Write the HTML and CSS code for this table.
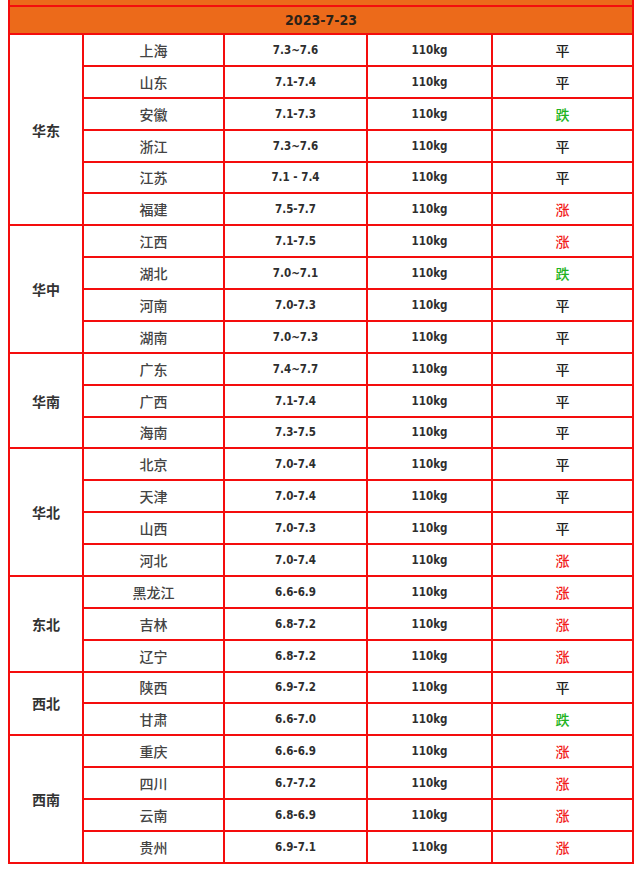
FILE: index.html
```html
<!DOCTYPE html>
<html lang="zh">
<head>
<meta charset="utf-8">
<title>2023-7-23</title>
<link rel="stylesheet" href="styles.css">
</head>
<body>
<table class="price">
  <colgroup>
    <col class="c-region"><col class="c-city"><col class="c-price"><col class="c-weight"><col class="c-trend">
  </colgroup>
  <tr class="cut"><td colspan="5"></td></tr>
  <tr class="head"><td colspan="5">2023-7-23</td></tr>

  <tr><td class="region" rowspan="6">华东</td><td class="city">上海</td><td class="num">7.3~7.6</td><td class="num">110kg</td><td class="flat">平</td></tr>
  <tr><td class="city">山东</td><td class="num">7.1-7.4</td><td class="num">110kg</td><td class="flat">平</td></tr>
  <tr><td class="city">安徽</td><td class="num">7.1-7.3</td><td class="num">110kg</td><td class="down">跌</td></tr>
  <tr><td class="city">浙江</td><td class="num">7.3~7.6</td><td class="num">110kg</td><td class="flat">平</td></tr>
  <tr><td class="city">江苏</td><td class="num">7.1 - 7.4</td><td class="num">110kg</td><td class="flat">平</td></tr>
  <tr><td class="city">福建</td><td class="num">7.5-7.7</td><td class="num">110kg</td><td class="up">涨</td></tr>

  <tr><td class="region" rowspan="4">华中</td><td class="city">江西</td><td class="num">7.1-7.5</td><td class="num">110kg</td><td class="up">涨</td></tr>
  <tr><td class="city">湖北</td><td class="num">7.0~7.1</td><td class="num">110kg</td><td class="down">跌</td></tr>
  <tr><td class="city">河南</td><td class="num">7.0-7.3</td><td class="num">110kg</td><td class="flat">平</td></tr>
  <tr><td class="city">湖南</td><td class="num">7.0~7.3</td><td class="num">110kg</td><td class="flat">平</td></tr>

  <tr><td class="region" rowspan="3">华南</td><td class="city">广东</td><td class="num">7.4~7.7</td><td class="num">110kg</td><td class="flat">平</td></tr>
  <tr><td class="city">广西</td><td class="num">7.1-7.4</td><td class="num">110kg</td><td class="flat">平</td></tr>
  <tr><td class="city">海南</td><td class="num">7.3-7.5</td><td class="num">110kg</td><td class="flat">平</td></tr>

  <tr><td class="region" rowspan="4">华北</td><td class="city">北京</td><td class="num">7.0-7.4</td><td class="num">110kg</td><td class="flat">平</td></tr>
  <tr><td class="city">天津</td><td class="num">7.0-7.4</td><td class="num">110kg</td><td class="flat">平</td></tr>
  <tr><td class="city">山西</td><td class="num">7.0-7.3</td><td class="num">110kg</td><td class="flat">平</td></tr>
  <tr><td class="city">河北</td><td class="num">7.0-7.4</td><td class="num">110kg</td><td class="up">涨</td></tr>

  <tr><td class="region" rowspan="3">东北</td><td class="city">黑龙江</td><td class="num">6.6-6.9</td><td class="num">110kg</td><td class="up">涨</td></tr>
  <tr><td class="city">吉林</td><td class="num">6.8-7.2</td><td class="num">110kg</td><td class="up">涨</td></tr>
  <tr><td class="city">辽宁</td><td class="num">6.8-7.2</td><td class="num">110kg</td><td class="up">涨</td></tr>

  <tr><td class="region" rowspan="2">西北</td><td class="city">陕西</td><td class="num">6.9-7.2</td><td class="num">110kg</td><td class="flat">平</td></tr>
  <tr><td class="city">甘肃</td><td class="num">6.6-7.0</td><td class="num">110kg</td><td class="down">跌</td></tr>

  <tr><td class="region" rowspan="4">西南</td><td class="city">重庆</td><td class="num">6.6-6.9</td><td class="num">110kg</td><td class="up">涨</td></tr>
  <tr><td class="city">四川</td><td class="num">6.7-7.2</td><td class="num">110kg</td><td class="up">涨</td></tr>
  <tr><td class="city">云南</td><td class="num">6.8-6.9</td><td class="num">110kg</td><td class="up">涨</td></tr>
  <tr><td class="city">贵州</td><td class="num">6.9-7.1</td><td class="num">110kg</td><td class="up">涨</td></tr>
</table>
</body>
</html>
```

FILE: styles.css
```css
html, body {
  margin: 0;
  padding: 0;
  background: #ffffff;
}

body {
  font-family: "Noto Sans CJK SC", "Noto Sans", sans-serif;
}

.price {
  margin: 0 0 0 8px;
  width: 624px;
  border-collapse: collapse;
  table-layout: fixed;
}

.c-region { width: 74px; }
.c-city { width: 141px; }
.c-price { width: 143px; }
.c-weight { width: 125px; }
.c-trend { width: 141px; }

.price td {
  border: 2px solid #f40d0d;
  padding: 0;
  text-align: center;
  vertical-align: middle;
  height: 29.88px;
  line-height: 18px;
}

.price tr.cut td {
  height: 5px;
  background: #ec6a1a;
  border-top: none;
}

.price tr.head td {
  height: 26px;
  background: #ec6a1a;
  color: #2d2218;
  font-family: "DejaVu Sans Condensed", "DejaVu Sans", "Noto Sans CJK SC", sans-serif;
  font-weight: bold;
  font-size: 14px;
}

.region {
  font-size: 14px;
  font-weight: bold;
  color: #333333;
}

.city {
  font-size: 14px;
  font-weight: 500;
  color: #444444;
}

.num {
  font-family: "DejaVu Sans Condensed", "DejaVu Sans", sans-serif;
  font-weight: bold;
  font-size: 11.5px;
  color: #2e2e2e;
}

.flat, .up, .down {
  font-size: 14px;
  font-weight: 500;
}

.flat { color: #222222; }
.up { color: #f21c1c; }
.down { color: #22b322; }
```
